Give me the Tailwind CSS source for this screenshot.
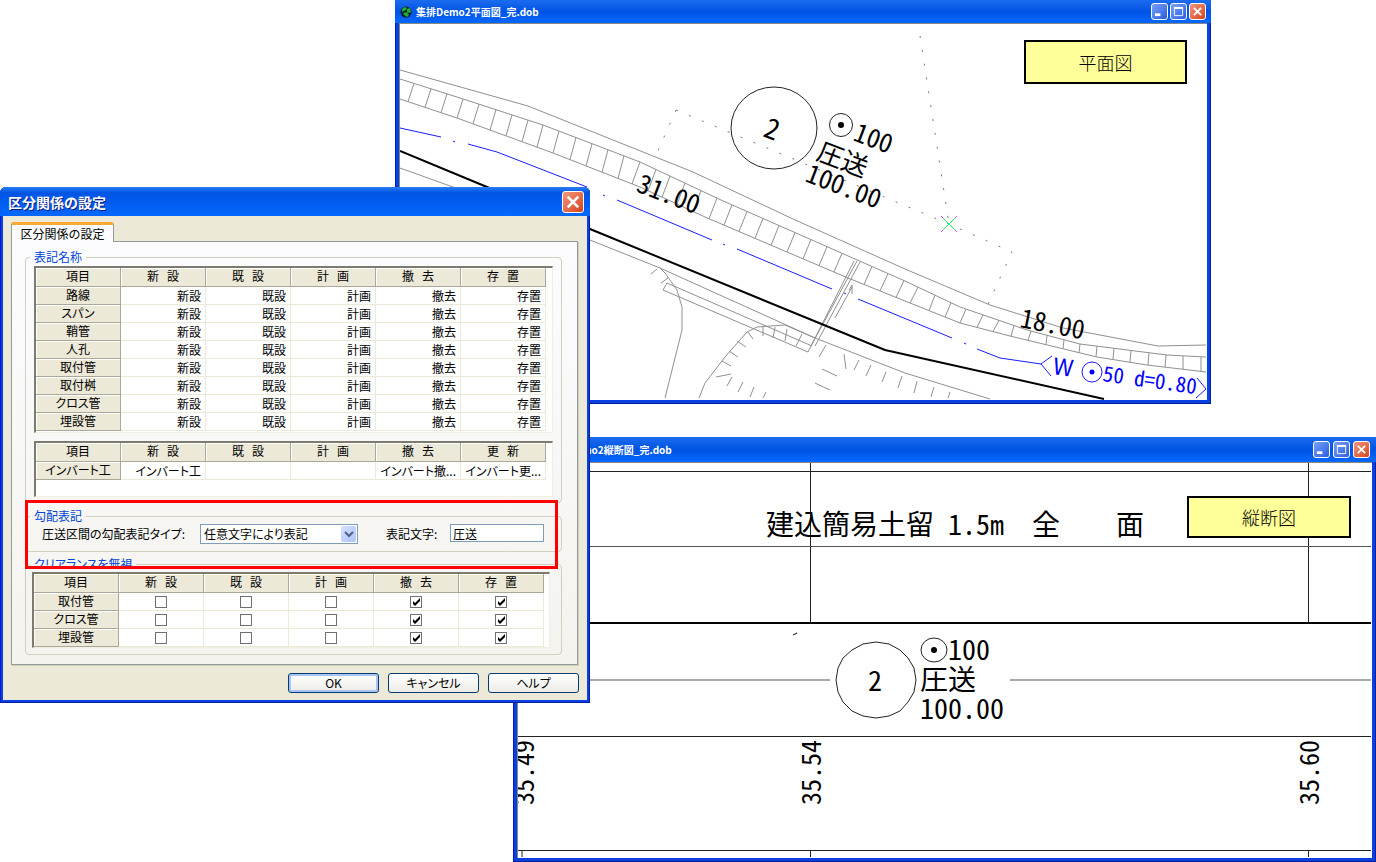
<!DOCTYPE html>
<html lang="ja">
<head>
  <meta charset="UTF-8">
  <meta name="viewport" content="width=device-width, initial-scale=1.0">
  <title>区分関係の設定</title>
  <script src="https://cdn.jsdelivr.net/npm/@tailwindcss/browser@4"></script>
</head>
<body class="bg-white font-['Noto_Sans_CJK_JP',sans-serif] text-black">

  <!-- Shared symbols -->
  <svg class="hidden">
    <symbol id="close" viewBox="0 0 12 12"><path d="M2 2l8 8M10 2l-8 8" stroke="#fff" stroke-width="2" fill="none" /></symbol>
    <symbol id="minimize" viewBox="0 0 12 12"><path d="M1 9.5h6" stroke="#fff" stroke-width="3" /></symbol>
    <symbol id="maximize" viewBox="0 0 12 12"><path d="M1.5 2.5h9v8h-9z" stroke="#fff" fill="none" /><path d="M1 2h10" stroke="#fff" stroke-width="2" /></symbol>
    <symbol id="tick" viewBox="0 0 12 12"><path d="M3 5v3l2 2 5-5V2L5 7z" fill="#000" /></symbol>
    <symbol id="globe" viewBox="0 0 12 12">
      <circle cx="6" cy="6" r="5.5" fill="#0a1a3c" />
      <path d="M2 3l3-2 2 1-1 2-2 1-2 1zM7 3l3-1 1 4-2 1-2-1zM3 7l4-1 2 3-2 2-3-2z" fill="#1fae2b" />
    </symbol>
  </svg>

  <main class="relative min-h-screen overflow-hidden">

    <!-- Plan view window -->
    <section class="absolute left-[395px] top-0 w-[816px] bg-[#0a3fe0] px-1 pb-1 shadow-[inset_-1px_-1px_0_#001ea0,inset_1px_0_0_#0019cf]">
      <header class="-mx-1 flex h-[23px] items-center bg-linear-to-b from-[#1c6cf0] via-[#0054e3] to-[#0468ff] pl-[5px] pr-[5px]">
        <svg class="size-3"><use href="#globe" /></svg>
        <h2 class="ml-1 flex-1 text-[10px] leading-4 font-bold text-white">集排Demo2平面図_完.dob</h2>
        <div class="flex gap-[2px]">
          <button aria-label="最小化" class="grid size-[17px] place-items-center rounded-[3px] border border-white bg-linear-to-br from-[#7aa0f5] to-[#2a5be0]"><svg class="size-[11px]"><use href="#minimize" /></svg></button>
          <button aria-label="最大化" class="grid size-[17px] place-items-center rounded-[3px] border border-white bg-linear-to-br from-[#7aa0f5] to-[#2a5be0]"><svg class="size-[11px]"><use href="#maximize" /></svg></button>
          <button aria-label="閉じる" class="grid size-[17px] place-items-center rounded-[3px] border border-white bg-linear-to-br from-[#f0967c] to-[#d8400f]"><svg class="size-[11px]"><use href="#close" /></svg></button>
        </div>
      </header>
      <div class="border-t border-l border-[#888880] bg-white">
        <svg viewBox="400 24 807 376" class="block w-full" fill="none" stroke="#909090">
          <!-- road edges -->
          <polyline points="400,70 528,106 693,172 793,219 905,269 990,305 1063,328 1158,346 1206,345" />
          <polyline points="400,79 457,97 543,125 640,162 721,200 905,281 960,307 1027,330 1080,344 1167,355 1206,357" />
          <polyline points="400,99 457,118 553,153 640,187 705,217 787,252 848,278 905,301 960,323 1010,336 1097,357 1147,365 1206,372" />
          <path id="steps" />
          <polyline points="400,168 453,187 590,240 660,268 815,338 905,373 990,399" />
          <!-- boundary dots -->
          <g stroke="#777" stroke-dasharray="2 12">
            <path d="M676 110L949 224L1012 252L988 304" />
            <path d="M676 110L657 153" />
            <path d="M920 36L949 224" />
          </g>
          <!-- bridge and ditch -->
          <path d="M667 283L812 346M663 290L808 352M667 283L663 290M854 261L808 352M857 261L811 346M860 262L815 346M835 318L852 287M849 290L852 285L852 294" />
          <path d="M660 268L665 273L677 290L682 307L682 330L665 398M657 269L651 274M668 278L661 283" />
          <path d="M699 398L705 383L725 357L747 332L757 327L785 325L815 338" />
          <path d="M748 332l5 7M737 341l9 6M729 351l9 6M722 361l9 5M716 377l15-3M763 326v10M775 327l-2 11M787 329l-2 12M802 334l-6 12M732 377l-5 9M743 382l-5 10M754 387l-4 10M766 392l-3 6M826 345l-7 12M844 354l2 15M859 360l-5 10M871 365l-5 11M886 372l-4 10M902 376l-4 12M822 369l15 7M815 383l15 7M917 381l-3 12M934 387l-3 10M950 392l-2 6" />
          <!-- pipes -->
          <polyline points="400,151 487,187 590,229 885,350 1104,399" stroke="#000" stroke-width="2" />
          <path d="M400 128L441 137M453 141l2 1M468 144L497 152L587 187M603 195l2 1M617 200L712 240M723 244l2 1M737 249L832 289M844 293l2 1M858 299L952 338M964 343l2 1M977 349L1000 358L1041 364" stroke="#1c1cff" />
          <path d="M1052 356L1041 364L1051 376M1197 378L1206 389L1196 398" stroke="#1c1cff" />
          <circle cx="1092" cy="372" r="10" stroke="#1c1cff" />
          <circle cx="1092" cy="372" r="2.5" fill="#00f" stroke="none" />
          <!-- manhole -->
          <ellipse cx="774" cy="128" rx="43" ry="41" stroke="#222" />
          <circle cx="841" cy="125" r="11.5" stroke="#222" />
          <circle cx="841" cy="125" r="3" fill="#000" stroke="none" />
          <path d="M941 216l16 16M957 216l-16 16" stroke="#f3f" />
          <path d="M943 218l12 12M955 218l-12 12" stroke="#2e6" />
          <g fill="#000" stroke="none" class="[font-feature-settings:'hwid'] text-[26px]">
            <text transform="translate(762 136) rotate(21)" class="text-[28px]">2</text>
            <text transform="translate(852 140) rotate(21)">100</text>
            <text transform="translate(815 159) rotate(21)">圧送</text>
            <text transform="translate(804 181) rotate(21)">100.00</text>
            <text transform="translate(635 191) rotate(21)">31.00</text>
            <text transform="translate(1019 327) rotate(11)">18.00</text>
          </g>
          <g fill="#00f" stroke="none" class="text-[21px]">
            <text transform="translate(1052 374) rotate(8)" class="text-[23px]">W</text>
            <text transform="translate(1102 381) rotate(8)" class="[font-feature-settings:'hwid']">50 d=0.80</text>
          </g>
        </svg>
      </div>
    </section>

    <!-- Profile window -->
    <section class="absolute left-[513px] top-[437px] w-[863px] bg-[#0a3fe0] px-1 pb-1 shadow-[inset_-1px_-1px_0_#001ea0,inset_1px_0_0_#0019cf]">
      <header class="-mx-1 flex h-[25px] items-center bg-linear-to-b from-[#1c6cf0] via-[#0054e3] to-[#0468ff] pl-5 pr-[6px]">
        <svg class="size-3"><use href="#globe" /></svg>
        <h2 class="ml-1 flex-1 text-[10px] leading-4 font-bold text-white">集排Demo2縦断図_完.dob</h2>
        <div class="flex gap-[3px]">
          <button aria-label="最小化" class="grid size-[17px] place-items-center rounded-[3px] border border-white bg-linear-to-br from-[#7aa0f5] to-[#2a5be0]"><svg class="size-[11px]"><use href="#minimize" /></svg></button>
          <button aria-label="最大化" class="grid size-[17px] place-items-center rounded-[3px] border border-white bg-linear-to-br from-[#7aa0f5] to-[#2a5be0]"><svg class="size-[11px]"><use href="#maximize" /></svg></button>
          <button aria-label="閉じる" class="grid size-[17px] place-items-center rounded-[3px] border border-white bg-linear-to-br from-[#f0967c] to-[#d8400f]"><svg class="size-[11px]"><use href="#close" /></svg></button>
        </div>
      </header>
      <div class="border-t border-l border-[#888880] bg-white">
        <svg viewBox="518 463 854 395" class="block w-full" fill="none" stroke="#222">
          <path d="M518 471.5H1371M518 736.5H1371M518 850.5H1371M810.500 463V623M1308.5 463V623M522 850V857M810.500 850V857M1308.5 850V857" />
          <path d="M518 546.5H1371M518 680H830M1010 680H1371" stroke="#555" />
          <path d="M518 623H1371" stroke="#000" stroke-width="2" />
          <path d="M793 635l4-2" stroke="#000" />
          <path d="M876 642L889 644L900 650L908 658L914 668L916 680L914 692L908 702L900 711L889 716L876 718L863 716L852 711L843 702L838 692L836 680L838 668L843 658L852 650L863 644Z" />
          <ellipse cx="934" cy="650" rx="13" ry="12" />
          <circle cx="934" cy="650" r="3" fill="#000" stroke="none" />
          <g fill="#000" stroke="none" class="[font-feature-settings:'hwid'] text-[28px]">
            <text y="535"><tspan x="766">建込簡易土留 1.5m</tspan><tspan x="1032">全</tspan><tspan x="1116">面</tspan></text>
            <text x="868" y="691">2</text>
            <text x="948" y="660">100</text>
            <text x="920" y="690">圧送</text>
            <text x="920" y="719">100.00</text>
          </g>
          <g fill="#000" stroke="none" class="[font-feature-settings:'hwid'] text-[26px]">
            <text transform="translate(534 805) rotate(-90)">35.49</text>
            <text transform="translate(821 805) rotate(-90)">35.54</text>
            <text transform="translate(1319 805) rotate(-90)">35.60</text>
          </g>
        </svg>
      </div>
    </section>

    <!-- Drawing labels -->
    <p class="absolute left-[1024px] top-[40px] w-[163px] border-2 border-black bg-[#ffff99] text-center text-[18px] leading-[40px] font-light">平面図</p>
    <p class="absolute left-[1187px] top-[496px] w-[164px] border-2 border-black bg-[#ffff99] text-center text-[18px] leading-[38px] font-light">縦断図</p>

    <!-- Settings dialog -->
    <form class="absolute left-0 top-[187px] w-[590px] rounded-t-[6px] bg-[#0a3fe0] px-[3px] pb-[3px] text-[12px] [font-feature-settings:'palt'] shadow-[inset_-1px_-1px_0_#001ea0,inset_1px_0_0_#0019cf]">
      <header class="-mx-[3px] flex h-[29px] items-center rounded-t-[6px] bg-linear-to-b from-[#2a7cf5] via-[#0054e3] via-20% to-[#0468ff] pl-2 pr-[6px]">
        <h1 class="flex-1 text-[14px] leading-5 font-bold text-white [font-feature-settings:normal] text-shadow-[1px_1px_0_#0a1883]">区分関係の設定</h1>
        <button type="button" aria-label="閉じる" class="grid size-[22px] place-items-center rounded-[3px] border border-white bg-linear-to-br from-[#f0967c] to-[#d8400f]"><svg class="size-4"><use href="#close" /></svg></button>
      </header>

      <div class="bg-[#ece9d8] pt-[6px] pr-[9px] pb-[7px] pl-2">
        <button type="button" class="relative -mb-px block h-5 w-[103px] rounded-t-[3px] border-x border-t-3 border-x-[#919b9c] border-t-[#f9a92f] bg-[#fcfcfe] text-center leading-4 [font-feature-settings:normal]">区分関係の設定</button>

        <div class="border border-[#919b9c] bg-linear-to-b from-[#fcfcfe] to-[#f4f3ee] pt-2 pr-[15px] pb-[9px] pl-[13px] shadow-[1px_1px_0_#d0cebf]">
          <fieldset class="rounded-[4px] border border-[#d0d0bf] px-2 pb-[5px]">
            <legend class="-ml-1 px-1 leading-[14px] text-[#0046d5]">表記名称</legend>
            <div class="mt-[2px] border-t-2 border-l-2 border-r border-b border-t-[#7d7b70] border-l-[#7d7b70] border-r-[#f1efe2] border-b-[#f1efe2] bg-white pb-px">
              <table class="w-[510px] table-fixed border-separate border-spacing-0 text-right leading-4 [&_tr]:h-[18px] [&_th]:border-r [&_th]:border-b [&_th]:border-[#aca899] [&_th]:bg-[#ece9d8] [&_th]:text-center [&_th]:align-top [&_th]:font-normal [&_th]:shadow-[inset_1px_1px_0_#fff] [&_td]:border-r [&_td]:border-b [&_td]:border-[#ece9d8] [&_td]:pr-1 [&_thead_th]:h-[19px]">
                <thead><tr><th>項目</th><th>新&nbsp;&nbsp;&nbsp;設</th><th>既&nbsp;&nbsp;&nbsp;設</th><th>計&nbsp;&nbsp;&nbsp;画</th><th>撤&nbsp;&nbsp;&nbsp;去</th><th>存&nbsp;&nbsp;&nbsp;置</th></tr></thead>
                <tbody>
                  <tr><th>路線</th><td>新設</td><td>既設</td><td>計画</td><td>撤去</td><td>存置</td></tr>
                  <tr><th>スパン</th><td>新設</td><td>既設</td><td>計画</td><td>撤去</td><td>存置</td></tr>
                  <tr><th>鞘管</th><td>新設</td><td>既設</td><td>計画</td><td>撤去</td><td>存置</td></tr>
                  <tr><th>人孔</th><td>新設</td><td>既設</td><td>計画</td><td>撤去</td><td>存置</td></tr>
                  <tr><th>取付管</th><td>新設</td><td>既設</td><td>計画</td><td>撤去</td><td>存置</td></tr>
                  <tr><th>取付桝</th><td>新設</td><td>既設</td><td>計画</td><td>撤去</td><td>存置</td></tr>
                  <tr><th>クロス管</th><td>新設</td><td>既設</td><td>計画</td><td>撤去</td><td>存置</td></tr>
                  <tr><th>埋設管</th><td>新設</td><td>既設</td><td>計画</td><td>撤去</td><td>存置</td></tr>
                </tbody>
              </table>
            </div>
            <div class="mt-2 border-t-2 border-l-2 border-r border-b border-t-[#7d7b70] border-l-[#7d7b70] border-r-[#f1efe2] border-b-[#f1efe2] bg-white pb-4">
              <table class="w-[510px] table-fixed border-separate border-spacing-0 text-right leading-4 [&_tr]:h-[18px] [&_th]:border-r [&_th]:border-b [&_th]:border-[#aca899] [&_th]:bg-[#ece9d8] [&_th]:text-center [&_th]:align-top [&_th]:font-normal [&_th]:shadow-[inset_1px_1px_0_#fff] [&_td]:border-r [&_td]:border-b [&_td]:border-[#ece9d8] [&_td]:pr-1 [&_td]:whitespace-nowrap [&_thead_th]:h-[19px]">
                <thead><tr><th>項目</th><th>新&nbsp;&nbsp;&nbsp;設</th><th>既&nbsp;&nbsp;&nbsp;設</th><th>計&nbsp;&nbsp;&nbsp;画</th><th>撤&nbsp;&nbsp;&nbsp;去</th><th>更&nbsp;&nbsp;&nbsp;新</th></tr></thead>
                <tbody>
                  <tr><th>インバート工</th><td>インバート工</td><td></td><td></td><td>インバート撤...</td><td>インバート更...</td></tr>
                </tbody>
              </table>
            </div>
          </fieldset>

          <fieldset class="mt-[6px] rounded-[4px] border border-[#d0d0bf] px-2 pb-[7px]">
            <legend class="-ml-1 px-1 leading-[14px] text-[#0046d5]">勾配表記</legend>
            <div class="flex items-center pt-px pl-2 leading-5">
              <label for="type" class="w-[158px]">圧送区間の勾配表記タイプ:</label>
              <div class="relative">
                <select id="type" class="block h-5 w-[158px] appearance-none border border-[#7f9db9] bg-white pl-[3px] leading-[18px]"><option>任意文字により表記</option></select>
                <span class="pointer-events-none absolute top-[2px] right-[2px] grid h-4 w-[15px] place-items-center rounded-[2px] bg-linear-to-br from-[#d6e0ff] to-[#aec3f8]">
                  <svg viewBox="0 0 10 8" class="h-2 w-[10px]"><path d="M1 2l4 4 4-4" fill="none" stroke="#4d6185" stroke-width="2" /></svg>
                </span>
              </div>
              <label for="label" class="ml-7 w-16">表記文字:</label>
              <input id="label" type="text" value="圧送" class="h-[18px] w-[94px] self-start border border-[#7f9db9] bg-white pl-[2px] leading-4">
            </div>
          </fieldset>

          <fieldset class="mt-[5px] rounded-[4px] border border-[#d0d0bf] pr-[11px] pb-[6px] pl-[6px]">
            <legend class="-ml-[2px] h-[14px] px-1 leading-[14px] text-[#0046d5]"><span class="block h-[10px] overflow-hidden">クリアランスを無視</span></legend>
            <div class="mt-px border-t-2 border-l-2 border-r border-b border-t-[#7d7b70] border-l-[#7d7b70] border-r-[#f1efe2] border-b-[#f1efe2] bg-white">
              <table class="w-[510px] table-fixed border-separate border-spacing-0 text-center leading-4 [&_tr]:h-[18px] [&_th]:border-r [&_th]:border-b [&_th]:border-[#aca899] [&_th]:bg-[#ece9d8] [&_th]:align-top [&_th]:font-normal [&_th]:shadow-[inset_1px_1px_0_#fff] [&_td]:border-r [&_td]:border-b [&_td]:border-[#ece9d8] [&_thead_th]:h-[19px] [&_label]:relative [&_label]:mx-auto [&_label]:block [&_label]:size-3 [&_input]:block [&_input]:size-3 [&_input]:appearance-none [&_input]:border [&_input]:border-[#707070] [&_input]:bg-white [&_svg]:pointer-events-none [&_svg]:absolute [&_svg]:inset-0 [&_svg]:size-3 [&_svg]:opacity-0 [&_input:checked+svg]:opacity-100">
                <thead><tr><th>項目</th><th>新&nbsp;&nbsp;&nbsp;設</th><th>既&nbsp;&nbsp;&nbsp;設</th><th>計&nbsp;&nbsp;&nbsp;画</th><th>撤&nbsp;&nbsp;&nbsp;去</th><th>存&nbsp;&nbsp;&nbsp;置</th></tr></thead>
                <tbody>
                  <tr>
                    <th>取付管</th>
                    <td><label><input type="checkbox" aria-label="取付管 新設"><svg><use href="#tick" /></svg></label></td>
                    <td><label><input type="checkbox" aria-label="取付管 既設"><svg><use href="#tick" /></svg></label></td>
                    <td><label><input type="checkbox" aria-label="取付管 計画"><svg><use href="#tick" /></svg></label></td>
                    <td><label><input type="checkbox" aria-label="取付管 撤去" checked><svg><use href="#tick" /></svg></label></td>
                    <td><label><input type="checkbox" aria-label="取付管 存置" checked><svg><use href="#tick" /></svg></label></td>
                  </tr>
                  <tr>
                    <th>クロス管</th>
                    <td><label><input type="checkbox" aria-label="クロス管 新設"><svg><use href="#tick" /></svg></label></td>
                    <td><label><input type="checkbox" aria-label="クロス管 既設"><svg><use href="#tick" /></svg></label></td>
                    <td><label><input type="checkbox" aria-label="クロス管 計画"><svg><use href="#tick" /></svg></label></td>
                    <td><label><input type="checkbox" aria-label="クロス管 撤去" checked><svg><use href="#tick" /></svg></label></td>
                    <td><label><input type="checkbox" aria-label="クロス管 存置" checked><svg><use href="#tick" /></svg></label></td>
                  </tr>
                  <tr>
                    <th>埋設管</th>
                    <td><label><input type="checkbox" aria-label="埋設管 新設"><svg><use href="#tick" /></svg></label></td>
                    <td><label><input type="checkbox" aria-label="埋設管 既設"><svg><use href="#tick" /></svg></label></td>
                    <td><label><input type="checkbox" aria-label="埋設管 計画"><svg><use href="#tick" /></svg></label></td>
                    <td><label><input type="checkbox" aria-label="埋設管 撤去" checked><svg><use href="#tick" /></svg></label></td>
                    <td><label><input type="checkbox" aria-label="埋設管 存置" checked><svg><use href="#tick" /></svg></label></td>
                  </tr>
                </tbody>
              </table>
            </div>
          </fieldset>
        </div>

        <div class="-mr-px mt-2 flex justify-end gap-[9px] leading-[18px]">
          <button type="button" class="h-5 w-[91px] rounded-[3px] border border-[#003c74] bg-linear-to-b from-white to-[#ecebe5] shadow-[inset_0_0_0_2px_#a9c3f2]">OK</button>
          <button type="button" class="h-5 w-[91px] rounded-[3px] border border-[#003c74] bg-linear-to-b from-white to-[#ecebe5]">キャンセル</button>
          <button type="button" class="h-5 w-[91px] rounded-[3px] border border-[#003c74] bg-linear-to-b from-white to-[#ecebe5]">ヘルプ</button>
        </div>
      </div>

      <!-- Highlight -->
      <div class="pointer-events-none absolute top-[313px] left-[25px] h-[69px] w-[533px] border-3 border-[#ff0000]"></div>
    </form>
  </main>

  <script>
    // Cross strokes between the two edges of the gutter
    const upper = [[400,79],[457,97],[543,125],[640,162],[721,200],[905,281],[960,307],[1027,330],[1080,344],[1167,355],[1206,357]];
    const lower = [[400,99],[457,118],[553,153],[640,187],[705,217],[787,252],[848,278],[905,301],[960,323],[1010,336],[1097,357],[1147,365],[1206,372]];
    const steps = [414,431,447,463,479,496,512,528,543,559,576,592,608,624,640,656,670,685,701,717,732,747,763,779,795,811,827,842,872,888,904,918,935,951,966,983,999,1014,1031,1047,1064,1080,1097,1114,1131,1149,1166,1183,1201];

    function yAt(line, x) {
      const i = Math.max(1, line.findIndex(p => p[0] >= x));
      const [x0, y0] = line[i - 1], [x1, y1] = line[i];
      return y0 + (y1 - y0) * (x - x0) / (x1 - x0);
    }

    const d = steps.map(x => {
      const lean = x < 640 ? 6 : x < 920 ? 8 : x < 1000 ? 6 : x < 1040 ? 3 : x < 1170 ? 1 : 0;
      return `M${x} ${yAt(upper, x)}L${x - lean} ${yAt(lower, x - lean)}`;
    });
    document.getElementById('steps').setAttribute('d', d.join(''));
  </script>
</body>
</html>
